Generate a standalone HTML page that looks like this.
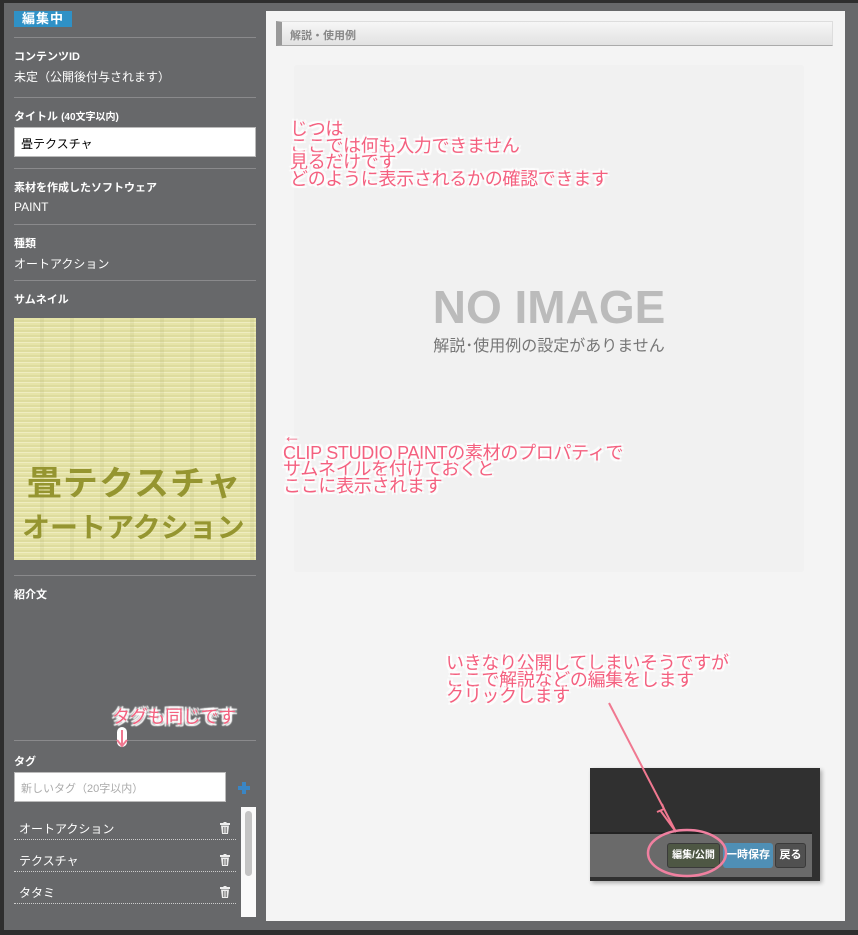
<!DOCTYPE html>
<html><head><meta charset="utf-8">
<style>
*{margin:0;padding:0;box-sizing:border-box}
body{width:858px;height:935px;background:#2e2e2e;font-family:"Liberation Sans","Noto Sans CJK JP",sans-serif;position:relative;overflow:hidden}
#frame{position:absolute;left:4px;top:3px;width:854px;height:927px;background:#67686a}
.a{position:absolute}
.lbl{color:#fff;font-weight:bold;font-size:11px}
.val{color:#fff;font-size:12px}
.hr{position:absolute;left:14px;width:242px;height:1px;background:#8a8a8c}
.pink{color:#f4607f;font-size:18px;line-height:16.7px;letter-spacing:-0.3px;text-shadow:0 0 3px #fff,0 0 3px #fff,0 0 3px #fff,2px 2px 1px #fff,-2px -2px 1px #fff,2px -2px 1px #fff,-2px 2px 1px #fff;white-space:nowrap}
.tag{position:absolute;left:14px;width:222px;height:32px;border-bottom:1px dotted #ccc;color:#fff;font-size:12px;padding:12px 0 0 5px}
.trash{position:absolute;right:6px;top:14px;width:10px;height:12px}
</style></head><body>
<div id="frame"></div>
<div class="a" style="left:14px;top:11px;width:58px;height:16px;background:#2f91c6;color:#fff;font-weight:bold;font-size:13px;line-height:16px;padding-left:8px;letter-spacing:1px">編集中</div>
<div class="hr" style="top:37px"></div>
<div class="a lbl" style="left:14px;top:48px">コンテンツID</div>
<div class="a val" style="left:14px;top:68px">未定（公開後付与されます）</div>
<div class="hr" style="top:97px"></div>
<div class="a lbl" style="left:14px;top:108px">タイトル <span style="font-size:10px">(40文字以内)</span></div>
<div class="a" style="left:14px;top:127px;width:242px;height:30px;background:#fff;border:1px solid #bbb;font-size:12px;padding:7px 6px;color:#000">畳テクスチャ</div>
<div class="hr" style="top:168px"></div>
<div class="a lbl" style="left:14px;top:179px">素材を作成したソフトウェア</div>
<div class="a val" style="left:14px;top:200px">PAINT</div>
<div class="hr" style="top:224px"></div>
<div class="a lbl" style="left:14px;top:235px">種類</div>
<div class="a val" style="left:14px;top:255px">オートアクション</div>
<div class="hr" style="top:280px"></div>
<div class="a lbl" style="left:14px;top:291px">サムネイル</div>
<div class="a" style="left:14px;top:318px;width:242px;height:242px;background:repeating-linear-gradient(0deg,#e6e4a8 0 2px,#efedc0 2px 3px,#dedc9e 3px 5px),#e8e6ae;overflow:hidden">
 <div class="a" style="left:0;top:0;width:242px;height:242px;background:repeating-linear-gradient(90deg,transparent 0 26px,rgba(160,160,100,.12) 26px 30px)"></div>
 <div class="a" style="left:16px;top:138px;color:#959530;font-size:34px;font-weight:bold;letter-spacing:1px;white-space:nowrap;transform:scaleX(1.03)">畳テクスチャ</div>
 <div class="a" style="left:8px;top:188px;color:#959530;font-size:28px;font-weight:bold;white-space:nowrap">オートアクション</div>
</div>
<div class="hr" style="top:575px"></div>
<div class="a lbl" style="left:14px;top:586px">紹介文</div>
<div class="hr" style="top:740px"></div>
<div class="a lbl" style="left:14px;top:753px">タグ</div>
<div class="a" style="left:14px;top:772px;width:212px;height:30px;background:#fff;border:1px solid #bbb;font-size:11px;color:#aaa;padding:7px 6px">新しいタグ（20字以内）</div>
<div class="a" style="left:238px;top:786px;width:12px;height:4px;background:#3a86c5"></div>
<div class="a" style="left:242px;top:782px;width:4px;height:12px;background:#3a86c5"></div>
<div class="tag" style="top:808px">オートアクション<svg class="trash" viewBox="0 0 10 12"><rect x="0" y="1" width="10" height="2" fill="#eee"/><rect x="3.5" y="0" width="3" height="1.5" fill="#eee"/><path d="M1 3.5h8l-1 8.5h-6z" fill="#eee"/><path d="M3.5 5v6M5 5v6M6.5 5v6" stroke="#666" stroke-width=".7"/></svg></div>
<div class="tag" style="top:840px">テクスチャ<svg class="trash" viewBox="0 0 10 12"><rect x="0" y="1" width="10" height="2" fill="#eee"/><rect x="3.5" y="0" width="3" height="1.5" fill="#eee"/><path d="M1 3.5h8l-1 8.5h-6z" fill="#eee"/><path d="M3.5 5v6M5 5v6M6.5 5v6" stroke="#666" stroke-width=".7"/></svg></div>
<div class="tag" style="top:872px">タタミ<svg class="trash" viewBox="0 0 10 12"><rect x="0" y="1" width="10" height="2" fill="#eee"/><rect x="3.5" y="0" width="3" height="1.5" fill="#eee"/><path d="M1 3.5h8l-1 8.5h-6z" fill="#eee"/><path d="M3.5 5v6M5 5v6M6.5 5v6" stroke="#666" stroke-width=".7"/></svg></div>
<div class="a" style="left:241px;top:807px;width:15px;height:110px;background:#fafafa"></div>
<div class="a" style="left:245px;top:811px;width:7px;height:65px;background:#c4c4c4;border-radius:4px"></div>
<div class="a" style="left:266px;top:11px;width:579px;height:910px;background:#f4f4f4"></div>
<div class="a" style="left:276px;top:21px;width:557px;height:25px;background:linear-gradient(#f6f6f6,#e2e2e2);border:1px solid #ddd;border-bottom:1px solid #aaa;border-left:6px solid #999;font-size:11px;font-weight:bold;color:#888;padding:5px 8px">解説・使用例</div>
<div class="a" style="left:294px;top:65px;width:510px;height:507px;background:#f1f1f1;border-radius:3px"></div>
<div class="a" style="left:294px;top:279px;width:510px;text-align:center;font-size:46px;font-weight:bold;color:#bbb;line-height:56px">NO IMAGE</div>
<div class="a" style="left:294px;top:332px;width:510px;text-align:center;font-size:16px;color:#777">解説･使用例の設定がありません</div>
<div class="a pink" style="left:290px;top:121px">じつは<br>ここでは何も入力できません<br>見るだけです<br>どのように表示されるかの確認できます</div>
<div class="a pink" style="left:283px;top:428px">←<br>CLIP STUDIO PAINTの素材のプロパティで<br>サムネイルを付けておくと<br>ここに表示されます</div>
<div class="a pink" style="left:446px;top:655px">いきなり公開してしまいそうですが<br>ここで解説などの編集をします<br>クリックします</div>
<div class="a pink" style="left:112px;top:709px">タグも同じです</div>
<div class="a" style="left:117px;top:727px;width:10px;height:20px;background:#fff;border-radius:5px"></div>
<div class="a" style="left:590px;top:768px;width:230px;height:113px;background:#303030;box-shadow:2px 2px 4px rgba(0,0,0,.3)"></div>
<div class="a" style="left:590px;top:832px;width:222px;height:45px;background:#6a6a6a;border-top:2px solid #222"></div>
<div class="a" style="left:667px;top:843px;width:53px;height:25px;background:#4e5744;border:1px solid #3a3a3a;border-radius:3px;color:#fff;font-size:10px;font-weight:bold;text-align:center;line-height:23px">編集/公開</div>
<div class="a" style="left:723px;top:843px;width:50px;height:25px;background:#4f8fb5;border-radius:3px;color:#fff;font-size:11px;font-weight:bold;text-align:center;line-height:25px">一時保存</div>
<div class="a" style="left:775px;top:843px;width:31px;height:25px;background:#505050;border:1px solid #3a3a3a;border-radius:3px;color:#fff;font-size:11px;font-weight:bold;text-align:center;line-height:23px">戻る</div>
<svg class="a" style="left:0;top:0" width="858" height="935">
 <g stroke="#f07890" stroke-width="2" fill="none">
  <line x1="609" y1="703" x2="676" y2="832"/>
  <path d="M657 812l7-3-2-5M660 810l16 22"/>
  <ellipse cx="687" cy="853" rx="39" ry="23" stroke="#f080a0" stroke-width="2.5"/>
  <line x1="122" y1="730" x2="122" y2="745"/>
  <path d="M117 740l5 6 5-6"/>
 </g>
</svg>
</body></html>
